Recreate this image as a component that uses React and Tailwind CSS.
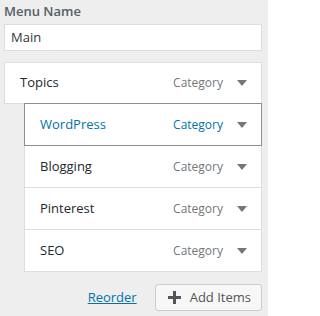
import React from "react";

const items = [
  { title: "WordPress", active: true },
  { title: "Blogging" },
  { title: "Pinterest" },
  { title: "SEO" },
];

const Arrow = () => (
  <svg width="10" height="6" viewBox="0 0 10 6" className="ml-[14px]">
    <path d="M0 0 L10 0 L5 6 Z" fill="#72777c" />
  </svg>
);

const MenuItem = ({ title, active, first }) => (
  <div
    className={`flex items-center h-[43px] pl-[15px] pr-[14px] bg-white border ${
      active ? "relative border-[#8c8f94]" : "border-[#ddd]"
    } ${first ? "" : "-mt-px"}`}
  >
    <span
      className={`flex-1 text-[13px] font-medium ${
        active ? "text-[#0073aa]" : "text-[#23282d]"
      }`}
    >
      {title}
    </span>
    <span
      className={`text-[12px] ${active ? "text-[#0073aa]" : "text-[#72777c]"}`}
    >
      Category
    </span>
    <Arrow />
  </div>
);

const App = () => {
  return (
    <div
      className="w-[268px] h-[316px] bg-[#eee] pl-1 pr-[6px] overflow-hidden"
      style={{ fontFamily: '"Open Sans", "Noto Sans", sans-serif' }}
    >
      <div className="text-[13px] font-semibold text-[#555d66] leading-[20px] pt-[1px]">
        Menu Name
      </div>
      <div className="mt-[3px] h-[27px] bg-white border border-[#ddd] flex items-center px-[6px] text-[13px] text-[#32373c]">
        Main
      </div>
      <div className="mt-[11px]">
        <div className="flex items-center h-[42px] pl-[15px] pr-[14px] bg-white border border-[#ddd]">
          <span className="flex-1 text-[13px] font-medium text-[#23282d]">
            Topics
          </span>
          <span className="text-[12px] text-[#72777c]">Category</span>
          <Arrow />
        </div>
        <div className="ml-[20px] -mt-px">
          {items.map((it, i) => (
            <MenuItem key={it.title} {...it} first={i === 0} />
          ))}
        </div>
      </div>
      <div className="flex items-center justify-end gap-[18px] mt-[12px]">
        <a href="#" className="text-[13px] text-[#0073aa] underline">
          Reorder
        </a>
        <button className="h-[27px] pl-[12px] pr-[10px] flex items-center gap-[9px] bg-[#f7f7f7] border border-[#ccc] rounded-[3px] text-[13px] text-[#555]">
          <svg width="13" height="13" viewBox="0 0 13 13">
            <path d="M5 0 H8 V5 H13 V8 H8 V13 H5 V8 H0 V5 H5 Z" fill="#555" />
          </svg>
          Add Items
        </button>
      </div>
    </div>
  );
};

export default App;
